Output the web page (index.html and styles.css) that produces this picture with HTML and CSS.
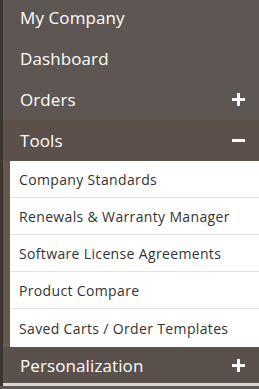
FILE: index.html
```html
<!DOCTYPE html>
<html lang="en">
<head>
<meta charset="UTF-8" />
<meta name="viewport" content="width=device-width, initial-scale=1" />
<title>My Company</title>
<link rel="stylesheet" href="styles.css">
</head>
<body>
<nav id="side">
  <ul class="menu">
    <li class="item"><a href="#">My Company</a></li>
    <li class="item"><a href="#">Dashboard</a></li>
    <li class="item"><a href="#">Orders</a><span class="toggle plus"></span></li>
    <li class="item open"><a href="#">Tools</a><span class="toggle minus"></span></li>
    <li class="sub">
      <ul>
        <li><a href="#">Company Standards</a></li>
        <li><a href="#">Renewals &amp; Warranty Manager</a></li>
        <li><a href="#">Software License Agreements</a></li>
        <li><a href="#">Product Compare</a></li>
        <li><a href="#">Saved Carts / Order Templates</a></li>
      </ul>
    </li>
    <li class="item last"><a href="#">Personalization</a><span class="toggle plus"></span></li>
  </ul>
</nav>
</body>
</html>
```

FILE: styles.css
```css
* {
  box-sizing: border-box;
}
html, body {
  margin: 0;
  height: 100%;
}
body {
  background: #5e5652;
  font-family: 'Open Sans', 'Noto Sans', sans-serif;
  overflow: hidden;
}
#side {
  height: 100%;
  border-left: 3px solid #3c3633;
  background: #5e5652;
}
.menu {
  list-style: none;
  margin: -3px 0 0;
  padding: 0;
}
.item {
  display: flex;
  align-items: center;
  justify-content: space-between;
  height: 41px;
  padding: 0 14px 0 17px;
}
.item a {
  color: #fff;
  text-decoration: none;
  font-size: 17px;
  letter-spacing: 0.1px;
}
.item.open {
  background: #5b504a;
}
.item.last {
  background: #5a514c;
  height: 39px;
  border-bottom: 3px solid #d9d7d6;
}
.toggle {
  position: relative;
  width: 13px;
  height: 13px;
}
.toggle::before,
.toggle::after {
  content: "";
  position: absolute;
  background: #fff;
}
.toggle::before {
  left: 0;
  top: 5px;
  width: 13px;
  height: 3px;
}
.plus::after {
  left: 5px;
  top: 0;
  width: 3px;
  height: 13px;
}
.sub {
  background: #66574f;
  padding-left: 7px;
}
.sub ul {
  list-style: none;
  margin: 0;
  padding: 0;
  background: #fff;
}
.sub li {
  height: 37px;
  display: flex;
  align-items: center;
  padding-left: 9px;
  border-bottom: 1px solid #e4e4e4;
}
.sub li:last-child {
  border-bottom: none;
  height: 38px;
}
.sub a {
  color: #333;
  text-decoration: none;
  font-size: 14px;
  letter-spacing: 0.35px;
}
```
